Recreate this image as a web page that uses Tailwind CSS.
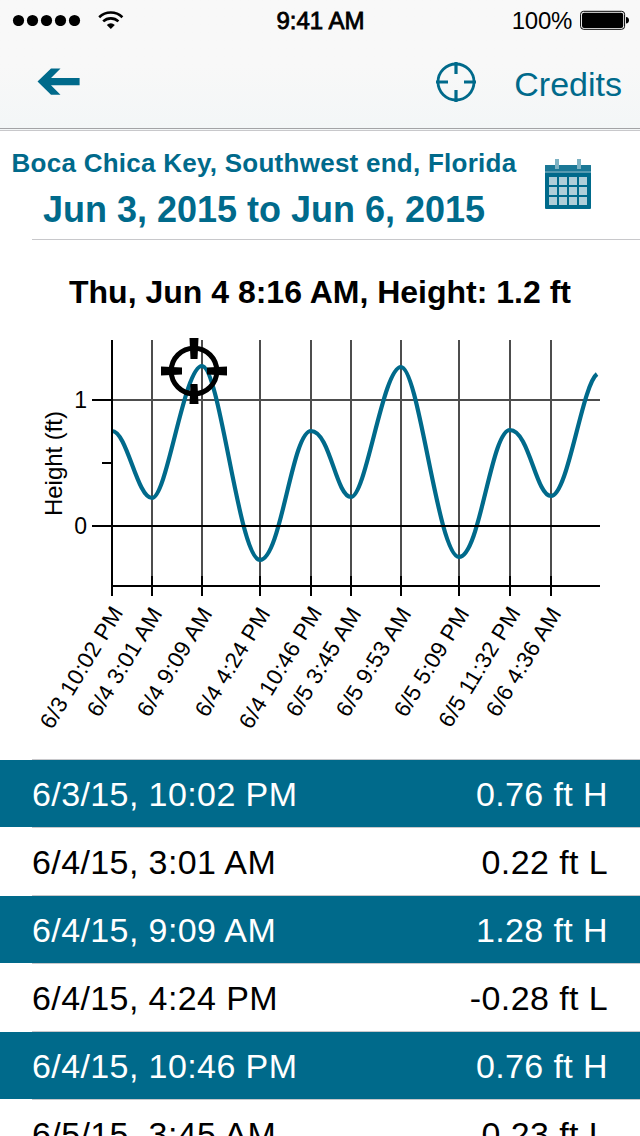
<!DOCTYPE html>
<html lang="en">
<head>
    <meta charset="UTF-8">
    <meta name="viewport" content="width=device-width, initial-scale=1.0">
    <title>Tides</title>
    <script src="https://cdn.jsdelivr.net/npm/@tailwindcss/browser@4"></script>
</head>
<body class="bg-white text-black font-['Liberation_Sans',Arial,sans-serif]">
    <div class="w-[640px] h-[1136px] overflow-hidden flex flex-col">
        <header class="h-[131px] shrink-0 flex flex-col bg-linear-to-b from-[#f8f8f8] from-50% to-[#f3f6f7]">
            <!-- status bar -->
            <div class="h-10 shrink-0 grid grid-cols-3 items-center pl-3 pr-[11px] text-[24px] leading-10">
                <div class="flex items-center gap-[17px]">
                    <svg class="w-[69px] h-[12px]" viewBox="0 0 69 12">
                        <circle cx="6.5" cy="6.500" r="5.6"/>
                        <circle cx="20.5" cy="6.500" r="5.6"/>
                        <circle cx="34.5" cy="6.500" r="5.6"/>
                        <circle cx="48.5" cy="6.500" r="5.6"/>
                        <circle cx="62.5" cy="6.500" r="5.6"/>
                    </svg>
                    <svg class="w-[26px] h-[18px]" viewBox="0 0 26 18" fill="none" stroke="black" stroke-width="2.6">
                        <path d="M1.2 6.2a16.8 16.8 0 0 1 23.2 0"/>
                        <path d="M5.2 10.4a11 11 0 0 1 15.2 0"/>
                        <path d="M12.8 18l-4-4.1a5.8 5.8 0 0 1 8 0z" fill="black" stroke="none"/>
                    </svg>
                </div>
                <div class="h-10 leading-[42px] text-center whitespace-nowrap [-webkit-text-stroke:0.8px_black]">9:41 AM</div>
                <div class="h-10 flex items-center justify-end gap-2">
                    <span class="h-10 leading-[42px] tracking-[-0.3px]">100%</span>
                    <svg class="w-[49px] h-[20px]" viewBox="0 0 49 20">
                        <rect x="0.6" y="1.300" width="44" height="18" rx="3" fill="white" stroke="black" stroke-width="1"/>
                        <rect x="2" y="2.700" width="41.2" height="15.2" rx="2"/>
                        <path d="M46 7c2 0 3 1.5 3 3.300s-1 3.300-3 3.300z"/>
                    </svg>
                </div>
            </div>
            <!-- nav bar -->
            <div class="h-[88px] shrink-0 flex items-center pl-[37px] pr-[18px] pb-1">
                <svg class="w-[43px] h-[28px]" viewBox="0 0 43 28" fill="#006a8b">
                    <path d="M0.500 13.500L14 0.500h9.500L14 10h28.600v7.200H14l9.500 9.600H14z"/>
                </svg>
                <svg class="ml-auto w-10 h-10" viewBox="0 0 40 40" fill="none" stroke="#006a8b" stroke-width="2.800">
                    <circle cx="20" cy="20" r="18"/>
                    <path d="M20 0v12M20 28v12M0 20h12M28 20h12" stroke-width="3.200"/>
                </svg>
                <span class="ml-[38px] pt-1 text-[34px] leading-10 text-[#006a8b]">Credits</span>
            </div>
            <div class="h-[3px] shrink-0 border-t border-b border-t-[#a3a3a6] border-b-[#c8c8cb]"></div>
        </header>

        <section class="h-[108px] shrink-0 flex font-bold text-[#006a8b] whitespace-nowrap">
            <div class="w-[528px] flex flex-col items-center pt-[15px]">
                <div class="text-[26px] leading-[34px] tracking-[0.26px]">Boca Chica Key, Southwest end, Florida</div>
                <div class="text-[36px] leading-[40px] mt-[10px]">Jun 3, 2015 to Jun 6, 2015</div>
            </div>
            <svg class="ml-[17px] mt-[28px] w-[46px] h-[50px]" viewBox="0 0 46 50">
                <rect y="6" width="46" height="44" rx="1" fill="#006a8b"/>
                <rect y="6" width="46" height="6" rx="1" fill="#1b7896"/>
                <rect y="12" width="46" height="2" fill="#569ab0"/>
                <path d="M10 0h4v10h-4zM32 0h4v10h-4z" fill="#7db2c3"/>
                <path d="M4 18h8v8h-8zM14 18h8v8h-8zM24 18h8v8h-8zM34 18h8v8h-8zM4 28h8v8h-8zM14 28h8v8h-8zM24 28h8v8h-8zM34 28h8v8h-8zM4 38h8v8h-8zM14 38h8v8h-8zM24 38h8v8h-8zM34 38h8v8h-8z" fill="#b0ced8"/>
            </svg>
        </section>
        <div class="ml-8 h-px shrink-0 bg-[#c8c8cb]"></div>

        <section class="h-[519px] shrink-0">
            <h1 class="h-[100px] pt-[32px] text-center text-[32px] leading-10 font-bold whitespace-nowrap">Thu, Jun 4 8:16 AM, Height: 1.2 ft</h1>
            <svg class="block w-[640px] h-[419px]" viewBox="0 340 640 419" overflow="visible">
                <!-- grid -->
                <path d="M152 340v236M202 340v236M260 340v236M311 340v236M351 340v236M401 340v236M459 340v236M510 340v236M551 340v236M112 400h488" stroke="#4d4d4d" stroke-width="2"/>
                <!-- tide curve -->
                <path d="M112 431C127 431 137 498 152 498S184 366 202 366S239 560 260 560S292 431 311 431S336 497 351 497S383 367 401 367S438 557 459 557S491 430 510 430S536 496 551 496C568 496 582 385 597 374" fill="none" stroke="#006a8b" stroke-width="4.200"/>
                <!-- axes -->
                <path d="M112 340v256M92 400h20M102 463h10M92 526h508M112 586h488M152 576v20M202 576v20M260 576v20M311 576v20M351 576v20M401 576v20M459 576v20M510 576v20M551 576v20" stroke="black" stroke-width="2"/>
                <g font-size="23" text-anchor="end">
                    <text x="87" y="408">1</text>
                    <text x="87" y="534">0</text>
                </g>
                <text transform="translate(62 516) rotate(-90)" font-size="24" textLength="105">Height (ft)</text>
                <g font-size="22.500">
                    <text transform="translate(52 730.500) rotate(-58.700)" textLength="138">6/3 10:02 PM</text>
                    <text transform="translate(99 718.500) rotate(-58.700)" textLength="123">6/4 3:01 AM</text>
                    <text transform="translate(149 718.500) rotate(-58.700)" textLength="123">6/4 9:09 AM</text>
                    <text transform="translate(207 718.500) rotate(-58.700)" textLength="123">6/4 4:24 PM</text>
                    <text transform="translate(251 730.500) rotate(-58.700)" textLength="138">6/4 10:46 PM</text>
                    <text transform="translate(298 718.500) rotate(-58.700)" textLength="123">6/5 3:45 AM</text>
                    <text transform="translate(348 718.500) rotate(-58.700)" textLength="123">6/5 9:53 AM</text>
                    <text transform="translate(406 718.500) rotate(-58.700)" textLength="123">6/5 5:09 PM</text>
                    <text transform="translate(450.500 729) rotate(-58.700)" textLength="136">6/5 11:32 PM</text>
                    <text transform="translate(498 718.500) rotate(-58.700)" textLength="123">6/6 4:36 AM</text>
                </g>
                <!-- cursor -->
                <g transform="translate(194 371)">
                    <circle r="22.800" fill="none" stroke="black" stroke-width="5"/>
                    <path d="M-4.500-33h9l-1 21h-7zM-4.500 33h9l-1-20h-7zM-33-4.500v9l21-1v-7zM33-4.500v9l-20-1v-7z"/>
                </g>
            </svg>
        </section>

        <div class="ml-8 h-px shrink-0 bg-[#c8c8cb]"></div>
        <ul class="text-[34px] leading-[69px] tracking-[0.4px]">
            <li>
                <div class="h-[67px] px-8 flex justify-between bg-[#006a8b] text-white"><span>6/3/15, 10:02 PM</span><span>0.76 ft H</span></div>
                <div class="ml-8 h-px bg-[#c8c8cb]"></div>
            </li>
            <li>
                <div class="h-[67px] px-8 flex justify-between"><span>6/4/15, 3:01 AM</span><span>0.22 ft L</span></div>
                <div class="ml-8 h-px bg-[#c8c8cb]"></div>
            </li>
            <li>
                <div class="h-[67px] px-8 flex justify-between bg-[#006a8b] text-white"><span>6/4/15, 9:09 AM</span><span>1.28 ft H</span></div>
                <div class="ml-8 h-px bg-[#c8c8cb]"></div>
            </li>
            <li>
                <div class="h-[67px] px-8 flex justify-between"><span>6/4/15, 4:24 PM</span><span>-0.28 ft L</span></div>
                <div class="ml-8 h-px bg-[#c8c8cb]"></div>
            </li>
            <li>
                <div class="h-[67px] px-8 flex justify-between bg-[#006a8b] text-white"><span>6/4/15, 10:46 PM</span><span>0.76 ft H</span></div>
                <div class="ml-8 h-px bg-[#c8c8cb]"></div>
            </li>
            <li>
                <div class="h-[67px] px-8 flex justify-between"><span>6/5/15, 3:45 AM</span><span>0.23 ft L</span></div>
            </li>
        </ul>
    </div>
</body>
</html>
